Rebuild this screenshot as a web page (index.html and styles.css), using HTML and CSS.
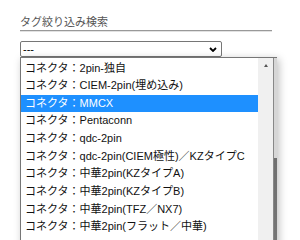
FILE: index.html
```html
<!DOCTYPE html>
<html lang="ja">
<head>
    <meta charset="UTF-8">
    <meta name="viewport" content="width=device-width, initial-scale=1.0">
    <title>タグ絞り込み検索</title>
    <link rel="stylesheet" href="styles.css">
</head>
<body>
    <div class="panel">
        <h3 class="tag-title">タグ絞り込み検索</h3>
        <div class="select-box">
            <span class="select-value">---</span>
            <svg class="chevron" width="8" height="5" viewBox="0 0 8 5">
                <path d="M1 1 L4 4 L7 1" fill="none" stroke="#000" stroke-width="1.8"/>
            </svg>
        </div>
        <div class="dropdown">
            <ul class="options">
                <li>コネクタ：2pin-独自</li>
                <li>コネクタ：CIEM-2pin(埋め込み)</li>
                <li class="selected">コネクタ：MMCX</li>
                <li>コネクタ：Pentaconn</li>
                <li>コネクタ：qdc-2pin</li>
                <li>コネクタ：qdc-2pin(CIEM極性)／KZタイプC</li>
                <li>コネクタ：中華2pin(KZタイプA)</li>
                <li>コネクタ：中華2pin(KZタイプB)</li>
                <li>コネクタ：中華2pin(TFZ／NX7)</li>
                <li>コネクタ：中華2pin(フラット／中華)</li>
            </ul>
            <div class="scroll-track">
                <span class="arrow-up"></span>
            </div>
            <div class="edge"></div>
        </div>
    </div>
</body>
</html>
```

FILE: styles.css
```css
body {
    margin: 0;
    padding: 0;
    background-color: #fff;
    font-family: "Liberation Sans", "Noto Sans CJK JP", sans-serif;
    overflow: hidden;
}
.panel {
    padding: 15px 0 0 20px;
}
.tag-title {
    margin: 0;
    width: 252px;
    font-size: 11px;
    font-weight: normal;
    line-height: 15px;
    color: #555;
    border-bottom: 1px solid #999;
    box-shadow: 0 1px 0 #e2e2e2;
}
.select-box {
    margin-top: 10px;
    width: 202px;
    height: 16px;
    box-sizing: border-box;
    border: 1px solid #767676;
    border-radius: 2px;
    display: flex;
    align-items: center;
    justify-content: space-between;
    padding: 0 4px 0 2px;
    font-size: 11px;
    color: #000;
}
.chevron {
    display: block;
}
.dropdown {
    display: flex;
    width: 257px;
    height: 190px;
    box-sizing: border-box;
    border: 1px solid #767676;
    border-right: none;
    box-shadow: 2px 2px 8px rgba(0, 0, 0, 0.25);
    overflow: hidden;
}
.options {
    list-style: none;
    margin: 0;
    padding: 1.5px 0 0 0;
    width: 237px;
}
.options li {
    height: 17.67px;
    line-height: 17.67px;
    padding-left: 4px;
    font-size: 11px;
    color: #111;
    white-space: nowrap;
}
.options li.selected {
    background-color: #1e90ff;
    color: #fff;
}
.scroll-track {
    width: 15px;
    background-color: #f0f0f0;
    display: flex;
    justify-content: center;
    padding-top: 6px;
    box-sizing: border-box;
}
.arrow-up {
    width: 0;
    height: 0;
    border-left: 2.5px solid transparent;
    border-right: 2.5px solid transparent;
    border-bottom: 3px solid #555;
}
.edge {
    width: 4px;
    border-left: 1px solid #888;
    box-sizing: border-box;
    background: linear-gradient(to bottom, #d6d6d6 0, #d6d6d6 100px, #6f6f6f 100px, #767676 100%);
}
```
